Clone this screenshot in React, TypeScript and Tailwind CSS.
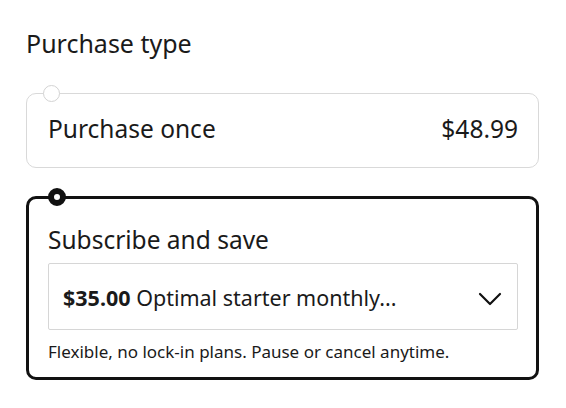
import React from 'react';

const font = { fontFamily: '"Noto Sans", sans-serif' };

function ChevronDown() {
  return (
    <svg width="24" height="14" viewBox="0 0 24 14" fill="none">
      <path d="M2 2 L12 12 L22 2" stroke="#111" strokeWidth="2.2" strokeLinecap="round" strokeLinejoin="round" />
    </svg>
  );
}

export default function App() {
  return (
    <div className="w-[566px] h-[408px] bg-white pl-[26px] pr-[27px] pt-[28px] text-[#1a1a1a]" style={font}>
      <div className="text-[25px] leading-[30px]">Purchase type</div>

      {/* Purchase once */}
      <div className="relative mt-[35px] h-[75px] rounded-[10px] border-[1.5px] border-[#d9d9d9] flex items-center justify-between pl-[21px] pr-[20px] pb-[2px]">
        <span className="absolute -top-[9.5px] left-[16px] w-[17px] h-[17px] rounded-full bg-white border-[1.5px] border-[#d3d3d3]" />
        <span className="text-[24.5px]">Purchase once</span>
        <span className="text-[24.5px]">$48.99</span>
      </div>

      {/* Subscribe and save */}
      <div className="relative mt-[28px] h-[184px] rounded-[10px] border-[3px] border-[#111] pl-[19px] pr-[18px] pt-[26px]">
        <span className="absolute -top-[11px] left-[19px] w-[18px] h-[18px] rounded-full bg-white border-[6px] border-[#111]" />
        <div className="text-[24.5px] leading-[30px]">Subscribe and save</div>
        <div className="mt-[8px] h-[67px] border-[1.5px] border-[#d6d6d6] rounded-[2px] flex items-center justify-between pl-[14px] pr-[15px] pt-[4px]">
          <span className="text-[21.5px]">
            <span className="font-bold">$35.00</span> Optimal starter monthly...
          </span>
          <ChevronDown />
        </div>
        <div className="mt-[11px] text-[17px] leading-[22px]">Flexible, no lock-in plans. Pause or cancel anytime.</div>
      </div>
    </div>
  );
}
